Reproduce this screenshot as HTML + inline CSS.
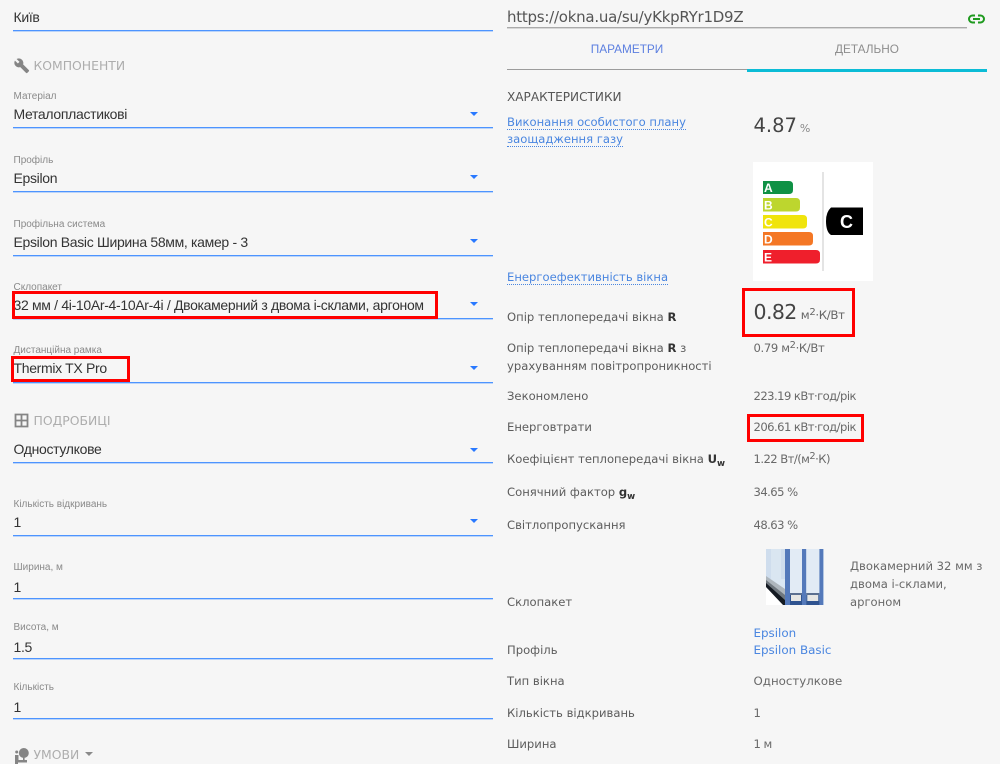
<!DOCTYPE html>
<html lang="uk"><head><meta charset="utf-8"><title>Вікно</title>
<style>
html,body{margin:0;padding:0;background:#f6f6f6}
#p{position:relative;width:1000px;height:764px;overflow:hidden;background:#f6f6f6;font-family:"Liberation Sans",sans-serif}
.t{position:absolute;white-space:nowrap;line-height:20px;height:20px}
.v{left:13.5px;font-size:14px;letter-spacing:-.32px;color:#333}
.l{left:13.5px;font-size:10px;color:#8a8a8a}
.h{left:33.5px;font-family:"DejaVu Sans",sans-serif;font-size:12.4px;color:#adadad}
.k{left:507px;font-family:"DejaVu Sans",sans-serif;font-size:11.6px;color:#5c5c5c}
.d{left:753.5px;font-family:"DejaVu Sans",sans-serif;font-size:11.6px;color:#696969}
.n{letter-spacing:-.55px}
.u{position:absolute;left:13px;width:480px;height:1px;background:#4d94ff;box-shadow:0 1px 0 rgba(77,148,255,.35)}
.a{position:absolute;left:469.5px;width:0;height:0;border-left:4px solid transparent;border-right:4px solid transparent;border-top:4px solid #2979ff}
.r{position:absolute;border:3px solid #f00;box-sizing:border-box}
sup{font-size:85%;line-height:0;vertical-align:baseline;position:relative;top:-.4em}
sub{font-size:75%;line-height:0;vertical-align:baseline;position:relative;top:.3em}
b{color:#333}
.lnk{color:#4a86e0}
.ul{border-bottom:1px dotted #4a86e0}
svg{position:absolute}
</style></head><body><div id="p">

<div class="t v" style="top:7px">Київ</div><div class="u" style="top:29.5px"></div>

<svg style="left:14px;top:58px" width="15.500" height="15.500" viewBox="0 0 24 24"><path fill="#858585" stroke="#858585" stroke-width=".8" d="M22.700 19l-9.100-9.100c.9-2.300.4-5-1.500-6.900-2-2-5-2.400-7.400-1.300L9 6 6 9 1.600 4.700C.4 7.100.9 10.100 2.900 12.100c1.900 1.900 4.600 2.400 6.900 1.500l9.100 9.100c.4.400 1 .4 1.400 0l2.300-2.300c.5-.4.500-1.100.1-1.400z"/></svg>
<div class="t h" style="top:56px">КОМПОНЕНТИ</div>

<div class="t l" style="top:87px">Матеріал</div><div class="t v" style="top:104px">Металопластикові</div><div class="a" style="top:112px"></div><div class="u" style="top:127px"></div>
<div class="t l" style="top:151px">Профіль</div><div class="t v" style="top:168px">Epsilon</div><div class="a" style="top:175px"></div><div class="u" style="top:190.500px"></div>
<div class="t l" style="top:215px">Профільна система</div><div class="t v" style="top:232px">Epsilon Basic Ширина 58мм, камер - 3</div><div class="a" style="top:239px"></div><div class="u" style="top:254.500px"></div>
<div class="t l" style="top:278px">Склопакет</div><div class="t v" style="top:295px">32 мм / 4і-10Ar-4-10Ar-4і / Двокамерний з двома і-склами, аргоном</div><div class="a" style="top:302px"></div><div class="u" style="top:318px"></div>
<div class="t l" style="top:341px">Дистанційна рамка</div><div class="t v" style="top:358px">Thermix TX Pro</div><div class="a" style="top:366px"></div><div class="u" style="top:381.500px"></div>

<svg style="left:14px;top:413px" width="15" height="15" viewBox="0 0 15 15"><path fill="none" stroke="#858585" stroke-width="1.800" d="M1.500 1.500h12v12h-12zM7.500 1.500v12M1.500 7.500h12"/></svg>
<div class="t h" style="top:411px">ПОДРОБИЦІ</div>
<div class="t v" style="top:439px">Одностулкове</div><div class="a" style="top:448px"></div><div class="u" style="top:462px"></div>

<div class="t l" style="top:495px">Кількість відкривань</div><div class="t v" style="top:512px">1</div><div class="a" style="top:519px"></div><div class="u" style="top:534.500px"></div>
<div class="t l" style="top:558px">Ширина, м</div><div class="t v" style="top:577px">1</div><div class="u" style="top:598px"></div>
<div class="t l" style="top:618px">Висота, м</div><div class="t v" style="top:637px">1.5</div><div class="u" style="top:658px"></div>
<div class="t l" style="top:678px">Кількість</div><div class="t v" style="top:697px">1</div><div class="u" style="top:718px"></div>

<svg style="left:14px;top:747px" width="16" height="17" viewBox="0 0 16 17"><circle cx="9.800" cy="6" r="5" fill="#858585"/><rect x="9" y="9" width="1.600" height="6" fill="#858585"/><circle cx="2.700" cy="5" r="1.500" fill="#858585"/><path fill="#858585" d="M1 8h3.500v5H13v2.500H4v1.500H1z"/></svg>
<div class="t h" style="top:745px">УМОВИ</div>
<div class="a" style="left:85px;top:752px;border-top:4px solid #8a8a8a"></div>

<div class="r" style="left:12px;top:291px;width:426px;height:28px"></div>
<div class="r" style="left:11px;top:356px;width:119px;height:26px"></div>

<div class="t" style="left:507px;top:7px;font-family:'DejaVu Sans',sans-serif;font-size:15px;letter-spacing:-.25px;color:#555">https://okna.ua/su/yKkpRYr1D9Z</div>
<div style="position:absolute;left:507px;top:27px;width:460px;height:1px;background:#aaa;box-shadow:0 1px 0 rgba(170,170,170,.4)"></div>
<svg style="left:967px;top:13px" width="19" height="12" viewBox="0 0 19 12"><path fill="none" stroke="#1f9a1f" stroke-width="2" d="M8 2.500H5.500a3.500 3.500 0 0 0 0 7H8M11 2.500h2.500a3.500 3.500 0 0 1 0 7H11M6 6h7"/></svg>

<div class="t" style="left:507px;width:240px;top:39px;text-align:center;font-size:11.800px;color:#5c7fe0">ПАРАМЕТРИ</div>
<div class="t" style="left:747px;width:240px;top:39px;text-align:center;font-size:11.800px;color:#8d8d8d">ДЕТАЛЬНО</div>
<div style="position:absolute;left:507px;top:69px;width:240px;height:1px;background:#9c9c9c"></div>
<div style="position:absolute;left:747px;top:69px;width:240px;height:2.500px;background:#0cbcd6"></div>

<div class="t k" style="top:87px;color:#555;font-size:12.100px">ХАРАКТЕРИСТИКИ</div>
<div class="t k lnk" style="top:112px"><span class="ul">Виконання особистого плану</span></div>
<div class="t k lnk" style="top:129px"><span class="ul">заощадження газу</span></div>
<div class="t" style="left:753.500px;top:116px;font-family:'DejaVu Sans',sans-serif;font-size:19.500px;color:#444">4.87<span style="font-size:11px;color:#888;margin-left:3px">%</span></div>

<svg style="left:753px;top:162px" width="120" height="119" viewBox="0 0 120 119">
<rect width="120" height="119" fill="#fff"/>
<rect x="69.500" y="10" width="1" height="99" fill="#c9c9c9"/>
<path fill="#0f9145" d="M10 19H36q4 0 4 4v5q0 4-4 4H10z"/>
<path fill="#bdd62e" d="M10 36H43q4 0 4 4v5.500q0 4-4 4H10z"/>
<path fill="#f0e40c" d="M10 53H50q4 0 4 4v5.500q0 4-4 4H10z"/>
<path fill="#f47725" d="M10 70H56q4 0 4 4v5.500q0 4-4 4H10z"/>
<path fill="#ef1f2c" d="M10 88H63q4 0 4 4v5.500q0 4-4 4H10z"/>
<g font-family="Liberation Sans" font-size="12" font-weight="700" fill="#fff">
<text x="11" y="30">A</text><text x="11" y="47.500">B</text><text x="11" y="64.500">C</text><text x="11" y="81.500">D</text><text x="11" y="99.500">E</text></g>
<path fill="#000" d="M78 45.500h32V73H78q-5-3-5-14 0-9 5-13.500z"/>
<text x="87" y="66" font-family="Liberation Sans" font-size="18" font-weight="700" fill="#fff">C</text>
</svg>

<div class="t k lnk" style="top:267px"><span class="ul">Енергоефективність вікна</span></div>

<div class="t k" style="top:307px">Опір теплопередачі вікна <b>R</b></div>
<div class="t" style="left:753.500px;top:302px;font-family:'DejaVu Sans',sans-serif;font-size:20.500px;letter-spacing:-.6px;color:#444">0.82<span style="font-size:11.800px;letter-spacing:-.35px;color:#666;margin-left:4px">м<sup>2</sup>·К/Вт</span></div>
<div class="t k" style="top:338px">Опір теплопередачі вікна <b>R</b> з</div>
<div class="t k" style="top:356px">урахуванням повітропроникності</div>
<div class="t d n" style="top:338px;letter-spacing:-.35px">0.79 м<sup>2</sup>·К/Вт</div>
<div class="t k" style="top:386px">Зекономлено</div><div class="t d n" style="top:386px">223.19 кВт·год/рік</div>
<div class="t k" style="top:417px">Енерговтрати</div><div class="t d n" style="top:417px">206.61 кВт·год/рік</div>
<div class="t k" style="top:449px">Коефіцієнт теплопередачі вікна <b>U<sub>w</sub></b></div><div class="t d n" style="top:449px">1.22 Вт/(м<sup>2</sup>·К)</div>
<div class="t k" style="top:482px">Сонячний фактор <b>g<sub>w</sub></b></div><div class="t d n" style="top:482px">34.65 %</div>
<div class="t k" style="top:515px">Світлопропускання</div><div class="t d n" style="top:515px">48.63 %</div>

<svg style="left:766px;top:549px" width="58" height="56" viewBox="0 0 58 56">
<rect width="58" height="56" fill="#dbe7f3"/>
<rect x="0" y="0" width="19" height="30" fill="#cfdded"/>
<rect x="5" y="0" width="10" height="34" fill="#dae6f1"/>
<path fill="#fff" d="M0 36l19 20H0z"/>
<path fill="#aeb6bd" d="M0 27l19 13v12L0 33z"/>
<path fill="#6f777e" d="M0 31l19 15v5L0 35z"/>
<path fill="#141a22" d="M0 34l19 17v5h-2L0 38z"/>
<rect x="19" y="0" width="5" height="56" fill="#5479ba"/>
<rect x="36" y="0" width="4.300" height="56" fill="#5479ba"/>
<rect x="53.300" y="0" width="4" height="56" fill="#5479ba"/>
<rect x="24" y="0" width="12" height="44" fill="#e2ebf5"/>
<rect x="40.300" y="0" width="13" height="44" fill="#e2ebf5"/>
<rect x="24" y="44" width="12" height="2" fill="#5b6f90"/>
<rect x="40.300" y="44" width="13" height="2" fill="#5b6f90"/>
<rect x="25" y="46" width="10" height="6" fill="#e6e6e4"/>
<rect x="41.300" y="46" width="11" height="6" fill="#e6e6e4"/>
<rect x="24" y="46" width="1" height="10" fill="#2f5390"/>
<rect x="35" y="46" width="1" height="10" fill="#2f5390"/>
<rect x="40.300" y="46" width="1" height="10" fill="#2f5390"/>
<rect x="52.300" y="46" width="1" height="10" fill="#2f5390"/>
<rect x="24" y="52" width="12" height="4" fill="#2f5390"/>
<rect x="40.300" y="52" width="13" height="4" fill="#2f5390"/>
</svg>
<div class="t d" style="left:850px;top:556px">Двокамерний 32 мм з</div>
<div class="t d" style="left:850px;top:574px">двома і-склами,</div>
<div class="t d" style="left:850px;top:592px">аргоном</div>
<div class="t k" style="top:592px">Склопакет</div>

<div class="t d" style="top:623px;color:#4a86e0;font-size:11.900px">Epsilon</div>
<div class="t d" style="top:640px;color:#4a86e0;font-size:11.900px">Epsilon Basic</div>
<div class="t k" style="top:640px">Профіль</div>
<div class="t k" style="top:671px">Тип вікна</div><div class="t d" style="top:671px;font-size:11.800px">Одностулкове</div>
<div class="t k" style="top:703px">Кількість відкривань</div><div class="t d n" style="top:703px">1</div>
<div class="t k" style="top:734px">Ширина</div><div class="t d n" style="top:734px">1 м</div>

<div class="r" style="left:742px;top:288px;width:113px;height:49px"></div>
<div class="r" style="left:747px;top:414px;width:117px;height:28px"></div>
</div></body></html>
